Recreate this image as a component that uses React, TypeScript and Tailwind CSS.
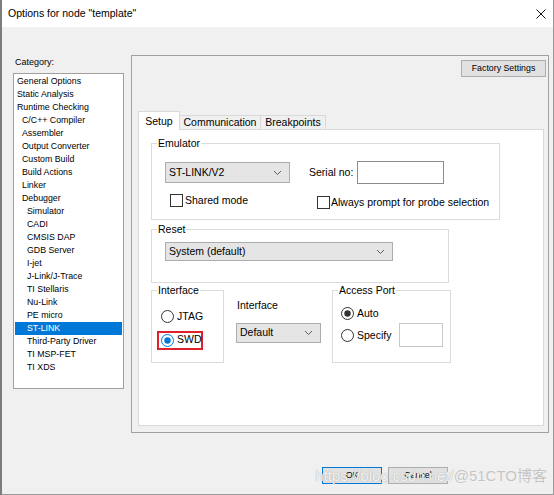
import type { ReactNode } from "react";

const categories: [string, number][] = [
  ["General Options", 0],
  ["Static Analysis", 0],
  ["Runtime Checking", 0],
  ["C/C++ Compiler", 1],
  ["Assembler", 1],
  ["Output Converter", 1],
  ["Custom Build", 1],
  ["Build Actions", 1],
  ["Linker", 1],
  ["Debugger", 1],
  ["Simulator", 2],
  ["CADI", 2],
  ["CMSIS DAP", 2],
  ["GDB Server", 2],
  ["I-jet", 2],
  ["J-Link/J-Trace", 2],
  ["TI Stellaris", 2],
  ["Nu-Link", 2],
  ["PE micro", 2],
  ["ST-LINK", 2],
  ["Third-Party Driver", 2],
  ["TI MSP-FET", 2],
  ["TI XDS", 2],
];

const indent = ["pl-[2px]", "pl-[7px]", "pl-[12px]"];

function Chevron() {
  return (
    <svg width="9" height="6" viewBox="0 0 9 6">
      <path d="M1 1l3.5 3.5L8 1" fill="none" stroke="#5f5f5f" strokeWidth="1" />
    </svg>
  );
}

function Select({ label, className }: { label: string; className: string }) {
  return (
    <div
      className={`flex items-center justify-between border border-[#adadad] bg-[#e5e5e5] pl-[3px] pr-[7px] ${className}`}
    >
      <span>{label}</span>
      <Chevron />
    </div>
  );
}

function Radio({ checked, color = "#333333" }: { checked?: boolean; color?: string }) {
  return (
    <svg width="13" height="13" viewBox="0 0 13 13" className="shrink-0">
      <circle cx="6.5" cy="6.5" r="6" fill="white" stroke={color} strokeWidth="1" />
      {checked && <circle cx="6.5" cy="6.5" r="3.2" fill={color} />}
    </svg>
  );
}

function Checkbox() {
  return <div className="h-[13px] w-[13px] shrink-0 border border-[#333333] bg-white" />;
}

function Group({ title, className, children }: { title: string; className: string; children: ReactNode }) {
  return (
    <fieldset className={`border border-[#dcdcdc] ${className}`}>
      <legend className="ml-[5px] px-[1px] leading-[14px]">{title}</legend>
      {children}
    </fieldset>
  );
}

export default function App() {
  return (
    <div className="flex h-[495px] w-[554px] bg-[#9a9a9a] font-['Liberation_Sans',sans-serif] text-black">
      <div className="w-[2px] bg-[#7c7c7c]" />
      <div className="relative mb-[1px] mr-[1px] flex flex-1 flex-col bg-[#f0f0f0]">
        {/* title bar */}
        <div className="flex h-[27px] items-center justify-between bg-white pl-[6px] pr-[7px] text-[10.5px]">
          <span>Options for node "template"</span>
          <svg width="10" height="10" viewBox="0 0 10 10">
            <path d="M0.5 0.5l9 9M9.5 0.5l-9 9" stroke="#111" strokeWidth="1" />
          </svg>
        </div>

        <div className="flex gap-[7px] pl-[11px] pt-[28px]">
          {/* category list */}
          <div className="w-[111px]">
            <div className="pl-[2px] text-[9px] leading-[14px]">Category:</div>
            <div className="mt-[4px] h-[316px] border border-[#a0a0a0] bg-white p-[1px] text-[8.8px]">
              {categories.map(([name, level]) => (
                <div
                  key={name}
                  className={`h-[13px] leading-[13px] ${indent[level]} ${
                    name === "ST-LINK" ? "bg-[#0078d7] text-white" : ""
                  }`}
                >
                  {name}
                </div>
              ))}
            </div>
          </div>

          {/* options panel */}
          <div className="h-[378px] w-[418px] border border-[#a0a0a0]">
            <div className="flex justify-end pr-[2px] pt-[4px]">
              <div className="flex h-[17px] w-[85px] items-center justify-center border border-[#adadad] bg-[#e1e1e1] text-[8.8px]">
                Factory Settings
              </div>
            </div>

            <div className="ml-[6px] mt-[34px] flex h-[18px] items-end text-[10.5px]">
              <div className="relative z-10 -mb-[1px] flex h-[19px] w-[42px] items-start justify-center border border-b-0 border-[#d9d9d9] bg-white pt-[2px]">
                Setup
              </div>
              <div className="flex h-[14px] w-[81px] items-center justify-center border border-b-0 border-l-0 border-[#d9d9d9] bg-[#f0f0f0]">
                Communication
              </div>
              <div className="flex h-[14px] w-[65px] items-center justify-center border border-b-0 border-l-0 border-[#d9d9d9] bg-[#f0f0f0]">
                Breakpoints
              </div>
            </div>

            <div className="ml-[6px] h-[297px] w-[406px] border border-[#d9d9d9] bg-white pl-[12px] pt-[6px] text-[10.5px]">
              <Group title="Emulator" className="h-[84px] w-[349px]">
                <div className="ml-[13px] mt-[11px] flex items-center">
                  <Select label="ST-LINK/V2" className="h-[21px] w-[125px]" />
                  <span className="ml-[19px] w-[48px]">Serial no:</span>
                  <div className="h-[23px] w-[87px] border border-[#8c8c8c] bg-white" />
                </div>
                <div className="ml-[18px] mt-[9px] flex items-start">
                  <div className="flex w-[147px] items-center gap-[2px]">
                    <Checkbox />
                    <span>Shared mode</span>
                  </div>
                  <div className="mt-[2px] flex items-center gap-[1px]">
                    <Checkbox />
                    <span>Always prompt for probe selection</span>
                  </div>
                </div>
              </Group>

              <Group title="Reset" className="mt-[2px] h-[61px] w-[298px]">
                <Select label="System (default)" className="ml-[13px] mt-[6px] h-[19px] w-[228px]" />
              </Group>

              <div className="flex items-start">
                <Group title="Interface" className="h-[80px] w-[73px]">
                  <div className="ml-[9px] mt-[12px] flex items-center gap-[3px]">
                    <Radio />
                    <span>JTAG</span>
                  </div>
                  <div className="ml-[5px] mt-[6px] flex h-[19px] w-[46px] items-center gap-[3px] border-2 border-[#e0202a] pl-[2px]">
                    <Radio checked color="#0078d7" />
                    <span>SWD</span>
                  </div>
                </Group>

                <div className="ml-[12px]">
                  <div className="mt-[15px] pl-[1px] leading-[14px]">Interface</div>
                  <Select label="Default" className="mt-[11px] h-[20px] w-[85px]" />
                </div>

                <Group title="Access Port" className="ml-[11px] h-[80px] w-[119px]">
                  <div className="ml-[8px] mt-[9px] flex items-center gap-[3px]">
                    <Radio checked />
                    <span>Auto</span>
                  </div>
                  <div className="ml-[8px] mt-[1px] flex items-center">
                    <div className="flex w-[58px] items-center gap-[3px] pt-[2px]">
                      <Radio />
                      <span>Specify</span>
                    </div>
                    <div className="h-[24px] w-[44px] border border-[#c8c8c8] bg-white" />
                  </div>
                </Group>
              </div>
            </div>
          </div>
        </div>

        {/* dialog buttons */}
        <div className="mt-[34px] flex gap-[6px] pl-[320px] text-[8.8px]">
          <div className="flex h-[17px] w-[60px] items-center justify-center border border-[#0078d7] bg-[#e1e1e1]">
            OK
          </div>
          <div className="flex h-[17px] w-[60px] items-center justify-center border border-[#adadad] bg-[#e1e1e1]">
            Cancel
          </div>
        </div>

        {/* watermark */}
        <div className="absolute bottom-[9px] right-[6px] font-['Liberation_Sans','Noto_Sans_CJK_SC',sans-serif] text-[15px] leading-[18px] [text-shadow:0_0_1px_#8a8a8a]">
          <span className="text-white/90">https://blog.csdn.net/</span>
          <span className="text-[#c4c4c4] [text-shadow:0_0_1px_#ffffff]">@51CTO博客</span>
        </div>
      </div>
    </div>
  );
}
